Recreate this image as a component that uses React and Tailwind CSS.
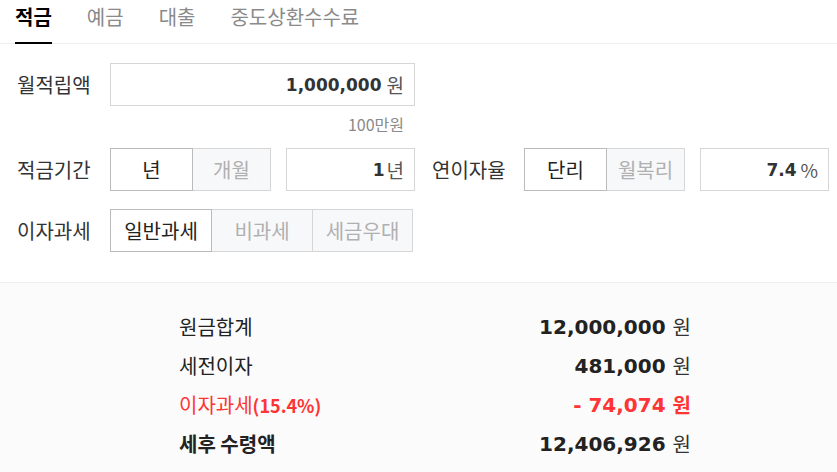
import React from "react";

const KR = "font-['Noto_Sans_CJK_KR','Noto_Sans',sans-serif]";
const NUM = "font-['DejaVu_Sans','Noto_Sans_CJK_KR',sans-serif]";

function Tabs() {
  const tabs = ["적금", "예금", "대출", "중도상환수수료"];
  return (
    <div className="flex h-[44px] border-b border-[#eeeeee] pl-[15px] gap-[35px]">
      {tabs.map((t, i) => (
        <div
          key={t}
          className={
            "h-[44px] -mb-px pt-[3px] text-[20px] leading-[28px] " +
            (i === 0
              ? "font-bold text-black border-b-2 border-black"
              : "text-[#8a8a8a]")
          }
        >
          {t}
        </div>
      ))}
    </div>
  );
}

function Label({ children, w = "w-[92px]" }) {
  return (
    <div className={w + " shrink-0 text-[20px] leading-[28px] text-[#333]"}>
      {children}
    </div>
  );
}

function Seg({ items, widths }) {
  return (
    <div className="flex h-[43px]">
      {items.map((t, i) => (
        <div
          key={t}
          className={
            widths[i] +
            " h-[43px] flex items-center justify-center text-[20px] leading-[28px] " +
            (i === 0
              ? "bg-white text-[#222] border border-[#bbbbbb]"
              : "bg-[#f7f8fa] text-[#b0b0b0] border-y border-r border-[#d6d6d6]")
          }
        >
          {t}
        </div>
      ))}
    </div>
  );
}

function Input({ w, value, unit, unitClass = "" }) {
  return (
    <div
      className={
        w +
        " h-[43px] border border-[#d6d6d6] flex items-center justify-end pr-[10px]"
      }
    >
      <span className={NUM + " font-bold text-[17px] text-[#333] leading-[24px]"}>
        {value}
      </span>
      <span className={"text-[19px] text-[#555] leading-[24px] " + unitClass}>
        {unit}
      </span>
    </div>
  );
}

function SumRow({ label, value, red, bold }) {
  const color = red ? "text-[#ff3434]" : "text-[#222]";
  return (
    <div className="flex items-center justify-between h-[39px]">
      <div className={"text-[20px] leading-[28px] " + color + (bold ? " font-bold" : "")}>
        {label}
      </div>
      <div className="flex items-center">
        <span className={NUM + " font-bold text-[20px] leading-[28px] " + color}>
          {value}
        </span>
        <span
          className={
            "ml-[7px] text-[20px] leading-[28px] " +
            (red ? "text-[#ff3434] font-bold" : "text-[#333]")
          }
        >
          원
        </span>
      </div>
    </div>
  );
}

export default function App() {
  return (
    <div className={KR + " w-[837px] h-[472px] bg-white overflow-hidden"}>
      <Tabs />
      <div className="pl-[17px] pt-[19px]">
        <div className="flex items-center">
          <Label w="w-[93px]">월적립액</Label>
          <Input w="w-[305px]" value="1,000,000" unit="원" unitClass="ml-[5px]" />
        </div>
        <div className="w-[397px] flex justify-end pr-[10px] h-[42px] pt-[7px] text-[16px] leading-[22px] text-[#8a8a8a]">
          <span>100만원</span>
        </div>
        <div className="flex items-center">
          <Label w="w-[93px]">적금기간</Label>
          <Seg items={["년", "개월"]} widths={["w-[83px]", "w-[78px]"]} />
          <div className="ml-[15px]">
            <Input w="w-[129px]" value="1" unit="년" unitClass="ml-[2px]" />
          </div>
          <div className="ml-[17px]">
            <Label w="w-[92px]">연이자율</Label>
          </div>
          <Seg items={["단리", "월복리"]} widths={["w-[83px]", "w-[78px]"]} />
          <div className="ml-[15px]">
            <Input w="w-[129px]" value="7.4" unit="%" unitClass="ml-[4px]" />
          </div>
        </div>
        <div className="flex items-center mt-[18px]">
          <Label w="w-[93px]">이자과세</Label>
          <Seg
            items={["일반과세", "비과세", "세금우대"]}
            widths={["w-[102px]", "w-[101px]", "w-[100px]"]}
          />
        </div>
      </div>
      <div className="mt-[30px] border-t border-[#eeeeee] bg-[#fbfbfb] h-[200px]">
        <div className="ml-[179px] w-[512px] pt-[24px]">
          <SumRow label="원금합계" value="12,000,000" />
          <SumRow label="세전이자" value="481,000" />
          <SumRow
            label={
              <span>
                이자과세<span className="font-bold text-[18px]">(15.4%)</span>
              </span>
            }
            value="- 74,074"
            red
          />
          <SumRow label="세후 수령액" value="12,406,926" bold />
        </div>
      </div>
    </div>
  );
}
